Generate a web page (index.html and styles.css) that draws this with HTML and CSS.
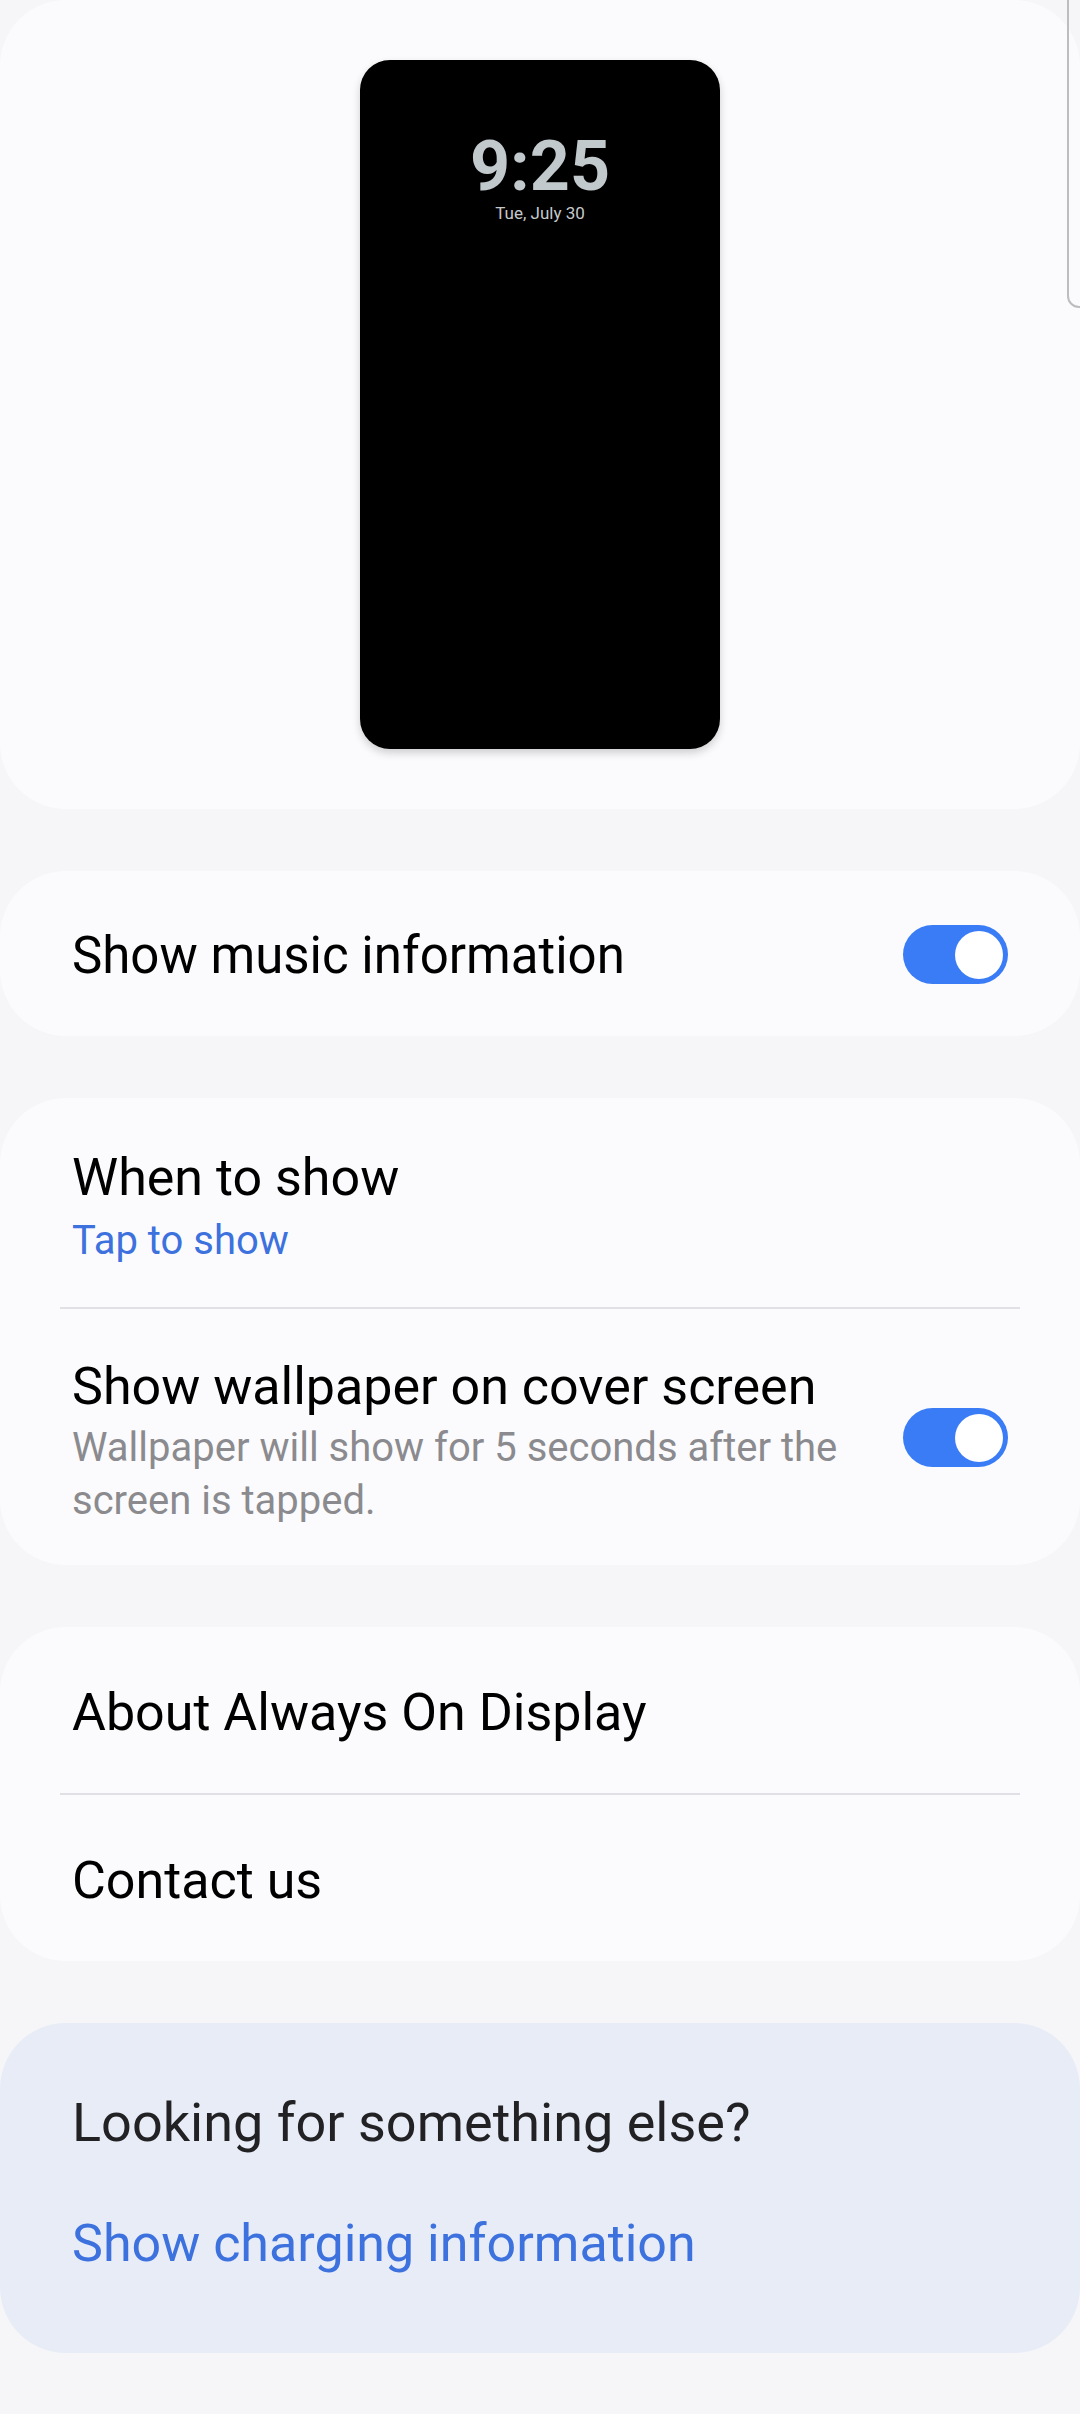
FILE: index.html
```html
<!DOCTYPE html>
<html lang="en">
<head>
<meta charset="utf-8">
<title>Always On Display</title>
<link rel="stylesheet" href="styles.css">
</head>
<body>
<div class="scroll-indicator"></div>
<main class="page">
  <section class="card preview-card">
    <div class="phone">
      <div class="clock">9:25</div>
      <div class="date">Tue, July 30</div>
    </div>
  </section>

  <section class="card">
    <div class="row row-single">
      <div class="row-text"><div class="title">Show music information</div></div>
      <div class="toggle toggle-up on"><div class="thumb"></div></div>
    </div>
  </section>

  <section class="card">
    <div class="row row-when">
      <div class="row-text">
        <div class="title">When to show</div>
        <div class="sub-blue">Tap to show</div>
      </div>
    </div>
    <div class="divider"></div>
    <div class="row row-wall">
      <div class="row-text">
        <div class="title">Show wallpaper on cover screen</div>
        <div class="sub-gray">Wallpaper will show for 5 seconds after the screen is tapped.</div>
      </div>
      <div class="toggle toggle-raised on"><div class="thumb"></div></div>
    </div>
  </section>

  <section class="card">
    <div class="row row-link"><div class="title">About Always On Display</div></div>
    <div class="divider"></div>
    <div class="row row-link"><div class="title">Contact us</div></div>
  </section>

  <section class="card suggest-card">
    <div class="suggest-head">Looking for something else?</div>
    <div class="suggest-link">Show charging information</div>
  </section>
</main>
</body>
</html>
```

FILE: styles.css
```css
* { box-sizing: border-box; }

html, body {
  margin: 0;
  padding: 0;
}

body {
  width: 1080px;
  min-height: 2414px;
  background: #f6f6f8;
  font-family: Roboto, "Noto Sans", sans-serif;
  color: #000;
  position: relative;
  overflow: hidden;
}

.page {
  display: flex;
  flex-direction: column;
  gap: 62px;
}

.card {
  background: #fbfbfd;
  border-radius: 66px;
  width: 1080px;
}

.preview-card {
  padding: 60px 0 60px;
  display: flex;
  justify-content: center;
}

.phone {
  width: 360px;
  height: 689px;
  background: #000;
  border-radius: 30px;
  box-shadow: 0 4px 8px rgba(0, 0, 0, 0.18);
  display: flex;
  flex-direction: column;
  align-items: center;
  padding-top: 66px;
}

.clock {
  font-size: 70px;
  font-weight: 700;
  color: #c2c9cc;
  line-height: 80px;
}

.date {
  font-size: 17px;
  color: #c6c9cb;
  line-height: 20px;
  margin-top: -3px;
}

.row {
  display: flex;
  align-items: center;
  justify-content: space-between;
  padding: 0 72px;
}

.row-text {
  display: flex;
  flex-direction: column;
}

.title {
  font-size: 52px;
  line-height: 62px;
  color: #000;
}

.row-single .title {
  font-size: 51px;
}

.row-single {
  padding-top: 54px;
  padding-bottom: 49px;
}

.toggle-up {
  margin-top: -3px;
}

.row-when {
  padding-top: 49px;
  padding-bottom: 41px;
}

.sub-blue {
  font-size: 40px;
  line-height: 50px;
  color: #3c71de;
  margin-top: 7px;
}

.row-wall {
  padding-top: 47px;
  padding-bottom: 38px;
  gap: 40px;
}

.sub-gray {
  font-size: 40px;
  line-height: 53px;
  color: #8b8b8f;
  max-width: 790px;
  margin-top: 3px;
}

.row-link {
  padding-top: 55px;
  padding-bottom: 49px;
}

.divider {
  height: 2px;
  background: #e1e1e5;
  margin: 0 60px;
}

.toggle {
  flex: none;
  width: 105px;
  height: 59px;
  border-radius: 30px;
  background: #3a7cf6;
  display: flex;
  align-items: center;
  justify-content: flex-end;
  padding-right: 5px;
}

.toggle-raised {
  margin-bottom: 8px;
}

.thumb {
  width: 48px;
  height: 48px;
  border-radius: 50%;
  background: #fff;
}

.suggest-card {
  background: #e7ecf7;
  padding: 67px 72px 78px;
}

.suggest-head {
  font-size: 54px;
  line-height: 66px;
  color: #222224;
}

.suggest-link {
  font-size: 52px;
  line-height: 62px;
  color: #3c71de;
  margin-top: 57px;
}

.scroll-indicator {
  position: absolute;
  left: 1067px;
  top: -20px;
  width: 30px;
  height: 328px;
  border: 2px solid #bdbdbf;
  border-radius: 12px;
  z-index: 2;
}
```
